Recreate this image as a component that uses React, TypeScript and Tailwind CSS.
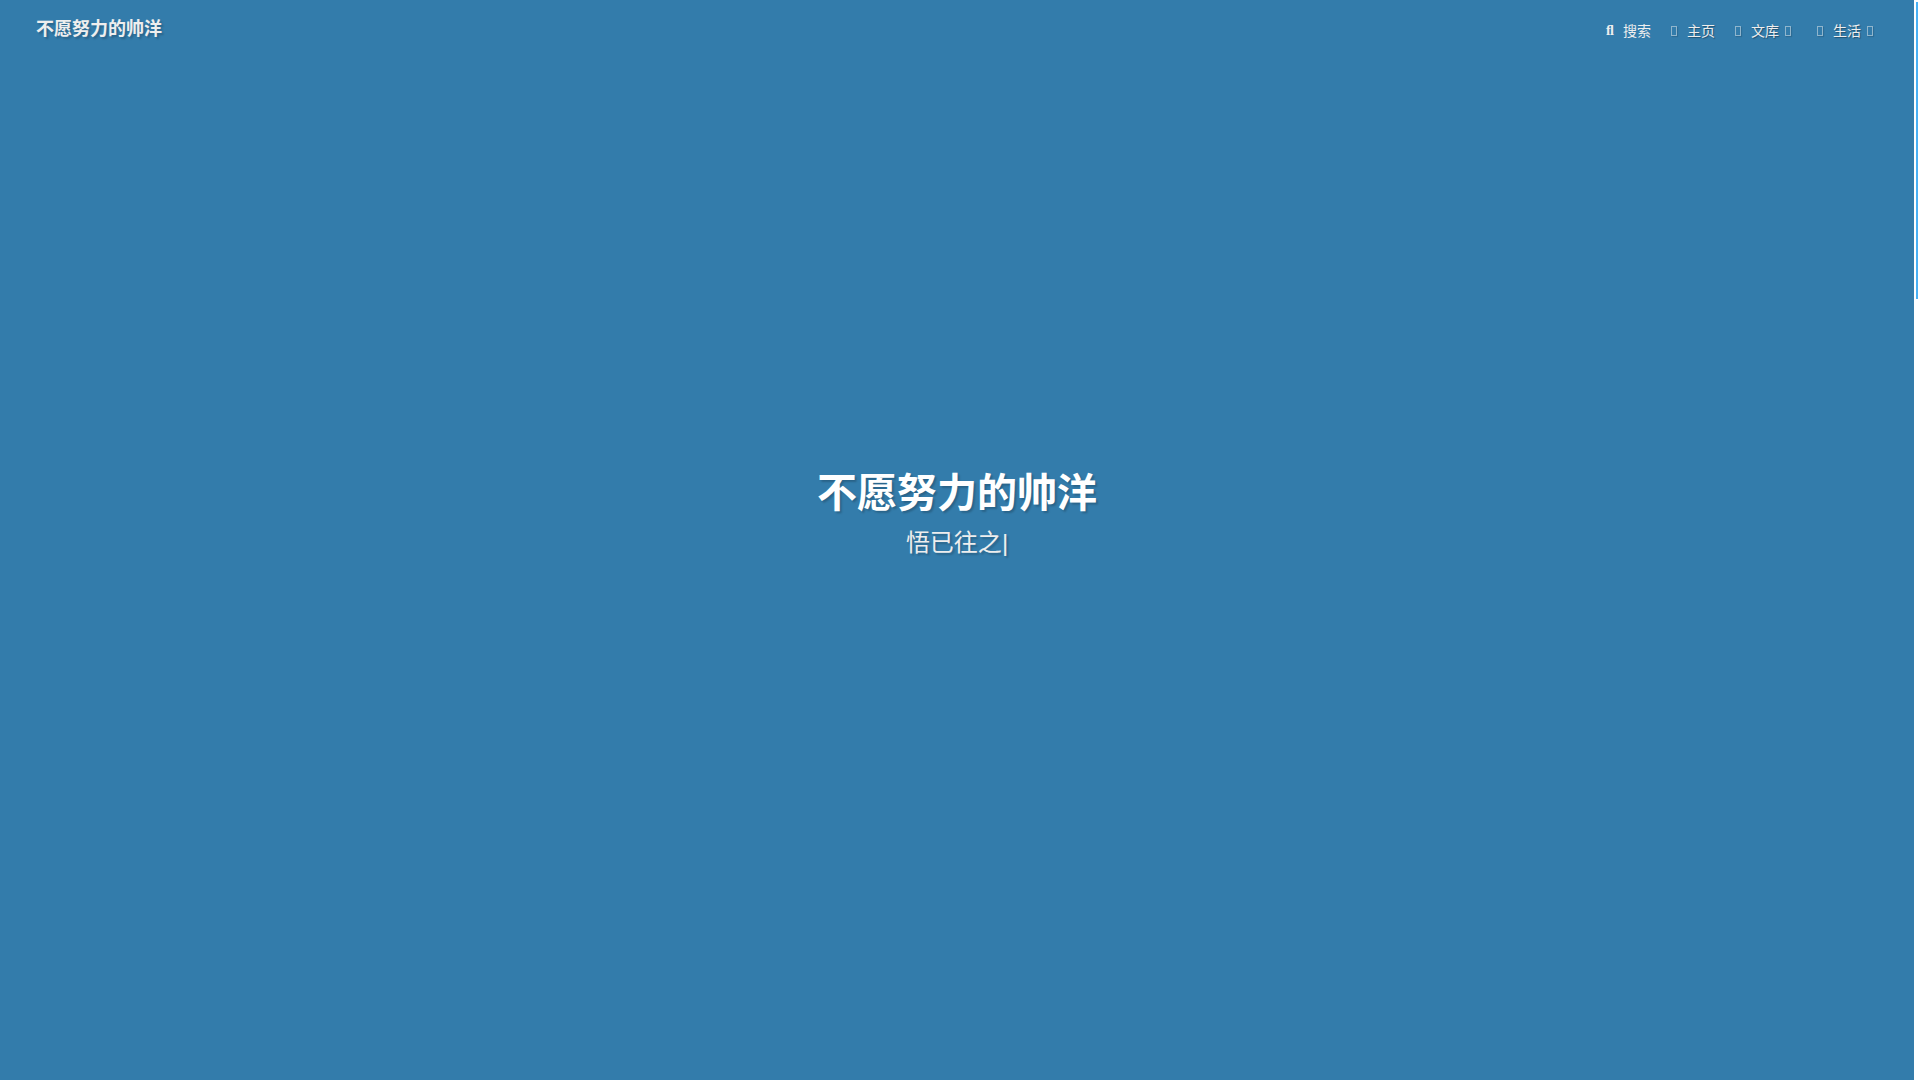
import React, { useState } from 'react';

interface MenuItem {
  name: string;
  href: string;
  hasChildren?: boolean;
}

const SITE_TITLE = '不愿努力的帅洋';

const MENU: MenuItem[] = [
  { name: '主页', href: '#home' },
  { name: '文库', href: '#library', hasChildren: true },
  { name: '生活', href: '#life', hasChildren: true },
];

// Hollow box shown where the icon font has no glyph
const BoxIcon: React.FC = () => (
  <span aria-hidden="true" className="flex w-[18px] justify-center">
    <span className="h-[10px] w-[6px] border border-[#eee]/50 [box-shadow:1px_1px_1px_rgba(0,0,0,0.12)]" />
  </span>
);

const Nav: React.FC<{ onSearch: () => void }> = ({ onSearch }) => (
  <nav className="flex h-[58px] items-center justify-between pl-9 pr-[35px] text-[#eee]">
    <a
      href="#home"
      className="text-lg font-bold [text-shadow:2px_2px_2px_rgba(0,0,0,0.2)]"
    >
      {SITE_TITLE}
    </a>
    <div className="flex items-center gap-[14px] pt-1 text-sm [text-shadow:1px_1px_1px_rgba(0,0,0,0.35)]">
      <button type="button" onClick={onSearch} className="flex cursor-pointer items-center">
        <span
          aria-hidden="true"
          className="w-[18px] text-center font-['Liberation_Serif',serif] font-bold"
        >
          ﬂ
        </span>
        <span className="pl-1">搜索</span>
      </button>
      {MENU.map((item) => (
        <a key={item.name} href={item.href} className="flex items-center">
          <BoxIcon />
          <span className="pl-1">{item.name}</span>
          {item.hasChildren && <BoxIcon />}
        </a>
      ))}
    </div>
  </nav>
);

const App: React.FC = () => {
  const [searching, setSearching] = useState(false);

  return (
    <div className="flex min-h-screen bg-white font-['Liberation_Sans','Noto_Sans_CJK_SC',sans-serif]">
      <header className="flex min-w-0 flex-1 flex-col bg-[#337cab]">
        <Nav onSearch={() => setSearching((s) => !s)} />
        {searching && (
          <input
            type="search"
            aria-label="搜索"
            className="mx-9 rounded bg-white px-3 py-2 text-sm text-gray-800"
          />
        )}
        <div className="flex flex-1 flex-col items-center justify-center pb-28 text-center">
          <h1 className="text-[40px] font-bold leading-[60px] text-white [text-shadow:2px_2px_2px_rgba(0,0,0,0.2)]">
            {SITE_TITLE}
          </h1>
          <div className="text-2xl leading-10 text-[#eee] [text-shadow:2px_2px_2px_rgba(0,0,0,0.2)]">
            <span>悟已往之</span>
            <span>|</span>
          </div>
        </div>
      </header>

      {/* Scroll track */}
      <div aria-hidden="true" className="flex w-[6px] flex-col items-center pt-[2px]">
        <div className="h-[297px] w-[2px] bg-[#49b1f5]" />
      </div>
    </div>
  );
};

export default App;
